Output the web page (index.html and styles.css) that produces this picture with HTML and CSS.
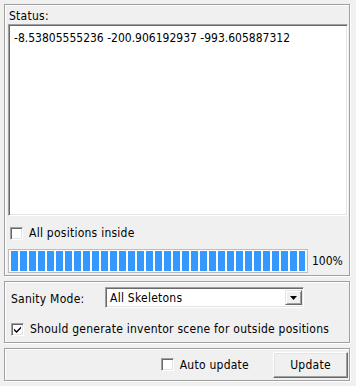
FILE: index.html
```html
<!DOCTYPE html>
<html>
<head>
<meta charset="utf-8">
<link rel="stylesheet" href="styles.css">
</head>
<body>
<div class="win">
  <section class="panel p1">
    <div class="label">Status:</div>
    <div class="textarea">-8.53805555236 -200.906192937 -993.605887312</div>
    <label class="check c1"><span class="box"></span><span class="txt">All positions inside</span></label>
    <div class="progress-row">
      <div class="bar"><div class="fill" style="width:100%"></div></div>
      <span class="pct">100%</span>
    </div>
  </section>
  <section class="panel p2">
    <div class="row">
      <span class="mode-label txt">Sanity Mode:</span>
      <div class="combo">
        <span class="combo-text txt">All Skeletons</span>
        <span class="drop"><svg width="7" height="4" viewBox="0 0 7 4"><path d="M0 0H7L3.5 4Z" fill="#000"/></svg></span>
      </div>
    </div>
    <label class="check c2"><span class="box"><svg width="9" height="9" viewBox="0 0 9 9"><path d="M1 3.5L3.5 6L8 1.5V3.5L3.5 8L1 5.5Z" fill="#000"/></svg></span><span class="txt">Should generate inventor scene for outside positions</span></label>
  </section>
  <section class="panel p3">
    <label class="check c3"><span class="box"></span><span class="txt">Auto update</span></label>
    <button class="btn txt">Update</button>
  </section>
</div>
</body>
</html>
```
FILE: styles.css
```css
html, body {
  margin: 0;
  padding: 0;
  background: #f0f0f0;
}
body {
  width: 356px;
  height: 386px;
  overflow: hidden;
  font-family: "DejaVu Sans Condensed", "DejaVu Sans", sans-serif;
  font-stretch: condensed;
  font-size: 12px;
  line-height: 14px;
  color: #000;
}
.txt {
  letter-spacing: 0.25px;
}
.win {
  padding: 4px 6px 0 4px;
  display: flex;
  flex-direction: column;
  gap: 5px;
}
.panel {
  box-sizing: border-box;
  border: 1px solid #a0a0a0;
  box-shadow: inset 1px 1px 0 #fff, 1px 1px 0 #fff;
  width: 346px;
}
.p1 {
  height: 272px;
  padding: 0 1px 0 3px;
}
.label {
  padding: 4px 0 0 1px;
  height: 14px;
  margin-bottom: 1px;
  letter-spacing: 0.25px;
}
.textarea {
  box-sizing: border-box;
  height: 192px;
  background: #fff;
  border: 1px solid;
  border-color: #a0a0a0 #fff #fff #a0a0a0;
  box-shadow: inset 1px 1px 0 #696969, inset -1px -1px 0 #e3e3e3;
  padding: 6px 5px;
  white-space: nowrap;
}
.check {
  display: flex;
  align-items: center;
  gap: 6px;
}
.box {
  box-sizing: border-box;
  width: 13px;
  height: 13px;
  background: #fff;
  border: 1px solid;
  border-color: #a0a0a0 #fff #fff #a0a0a0;
  box-shadow: inset 1px 1px 0 #696969, inset -1px -1px 0 #e3e3e3;
  display: flex;
  align-items: center;
  justify-content: center;
  flex: none;
}
.c1 {
  margin: 10px 0 0 2px;
}
.progress-row {
  display: flex;
  align-items: center;
  gap: 4px;
  margin-top: 9px;
}
.bar {
  box-sizing: border-box;
  width: 300px;
  height: 24px;
  border: 1px solid #bcbcbc;
  background: #fff;
  padding: 1px 2px;
}
.fill {
  height: 100%;
  background: repeating-linear-gradient(90deg, #3399ff 0 7px, transparent 7px 9px);
}
.p2 {
  height: 62px;
  padding: 5px 1px 0 6px;
}
.row {
  display: flex;
  align-items: flex-start;
}
.mode-label {
  width: 94px;
  margin-top: 5px;
}
.combo {
  box-sizing: border-box;
  width: 199px;
  height: 21px;
  background: #fff;
  border: 1px solid;
  border-color: #a0a0a0 #fff #fff #a0a0a0;
  box-shadow: inset 1px 1px 0 #696969, inset -1px -1px 0 #e3e3e3;
  display: flex;
  align-items: center;
  justify-content: space-between;
  padding: 0 1px 0 4px;
}
.drop {
  box-sizing: border-box;
  width: 17px;
  height: 15px;
  background: #f0f0f0;
  border: 1px solid;
  border-color: #e3e3e3 #696969 #696969 #e3e3e3;
  box-shadow: inset 1px 1px 0 #fff, inset -1px -1px 0 #a0a0a0;
  display: flex;
  align-items: center;
  justify-content: center;
}
.c2 {
  margin-top: 14px;
}
.p3 {
  height: 33px;
  padding: 0 1px 0 0;
  display: flex;
  align-items: center;
  justify-content: flex-end;
}
.c3 {
  margin-right: 24px;
}
.btn {
  box-sizing: border-box;
  width: 75px;
  height: 26px;
  margin-top: 1px;
  background: #f0f0f0;
  border: 1px solid;
  border-color: #fff #696969 #696969 #fff;
  box-shadow: inset -1px -1px 0 #a0a0a0, inset 1px 1px 0 #e3e3e3;
  font: inherit;
  letter-spacing: 0.25px;
  color: #000;
  padding: 0;
}
```
